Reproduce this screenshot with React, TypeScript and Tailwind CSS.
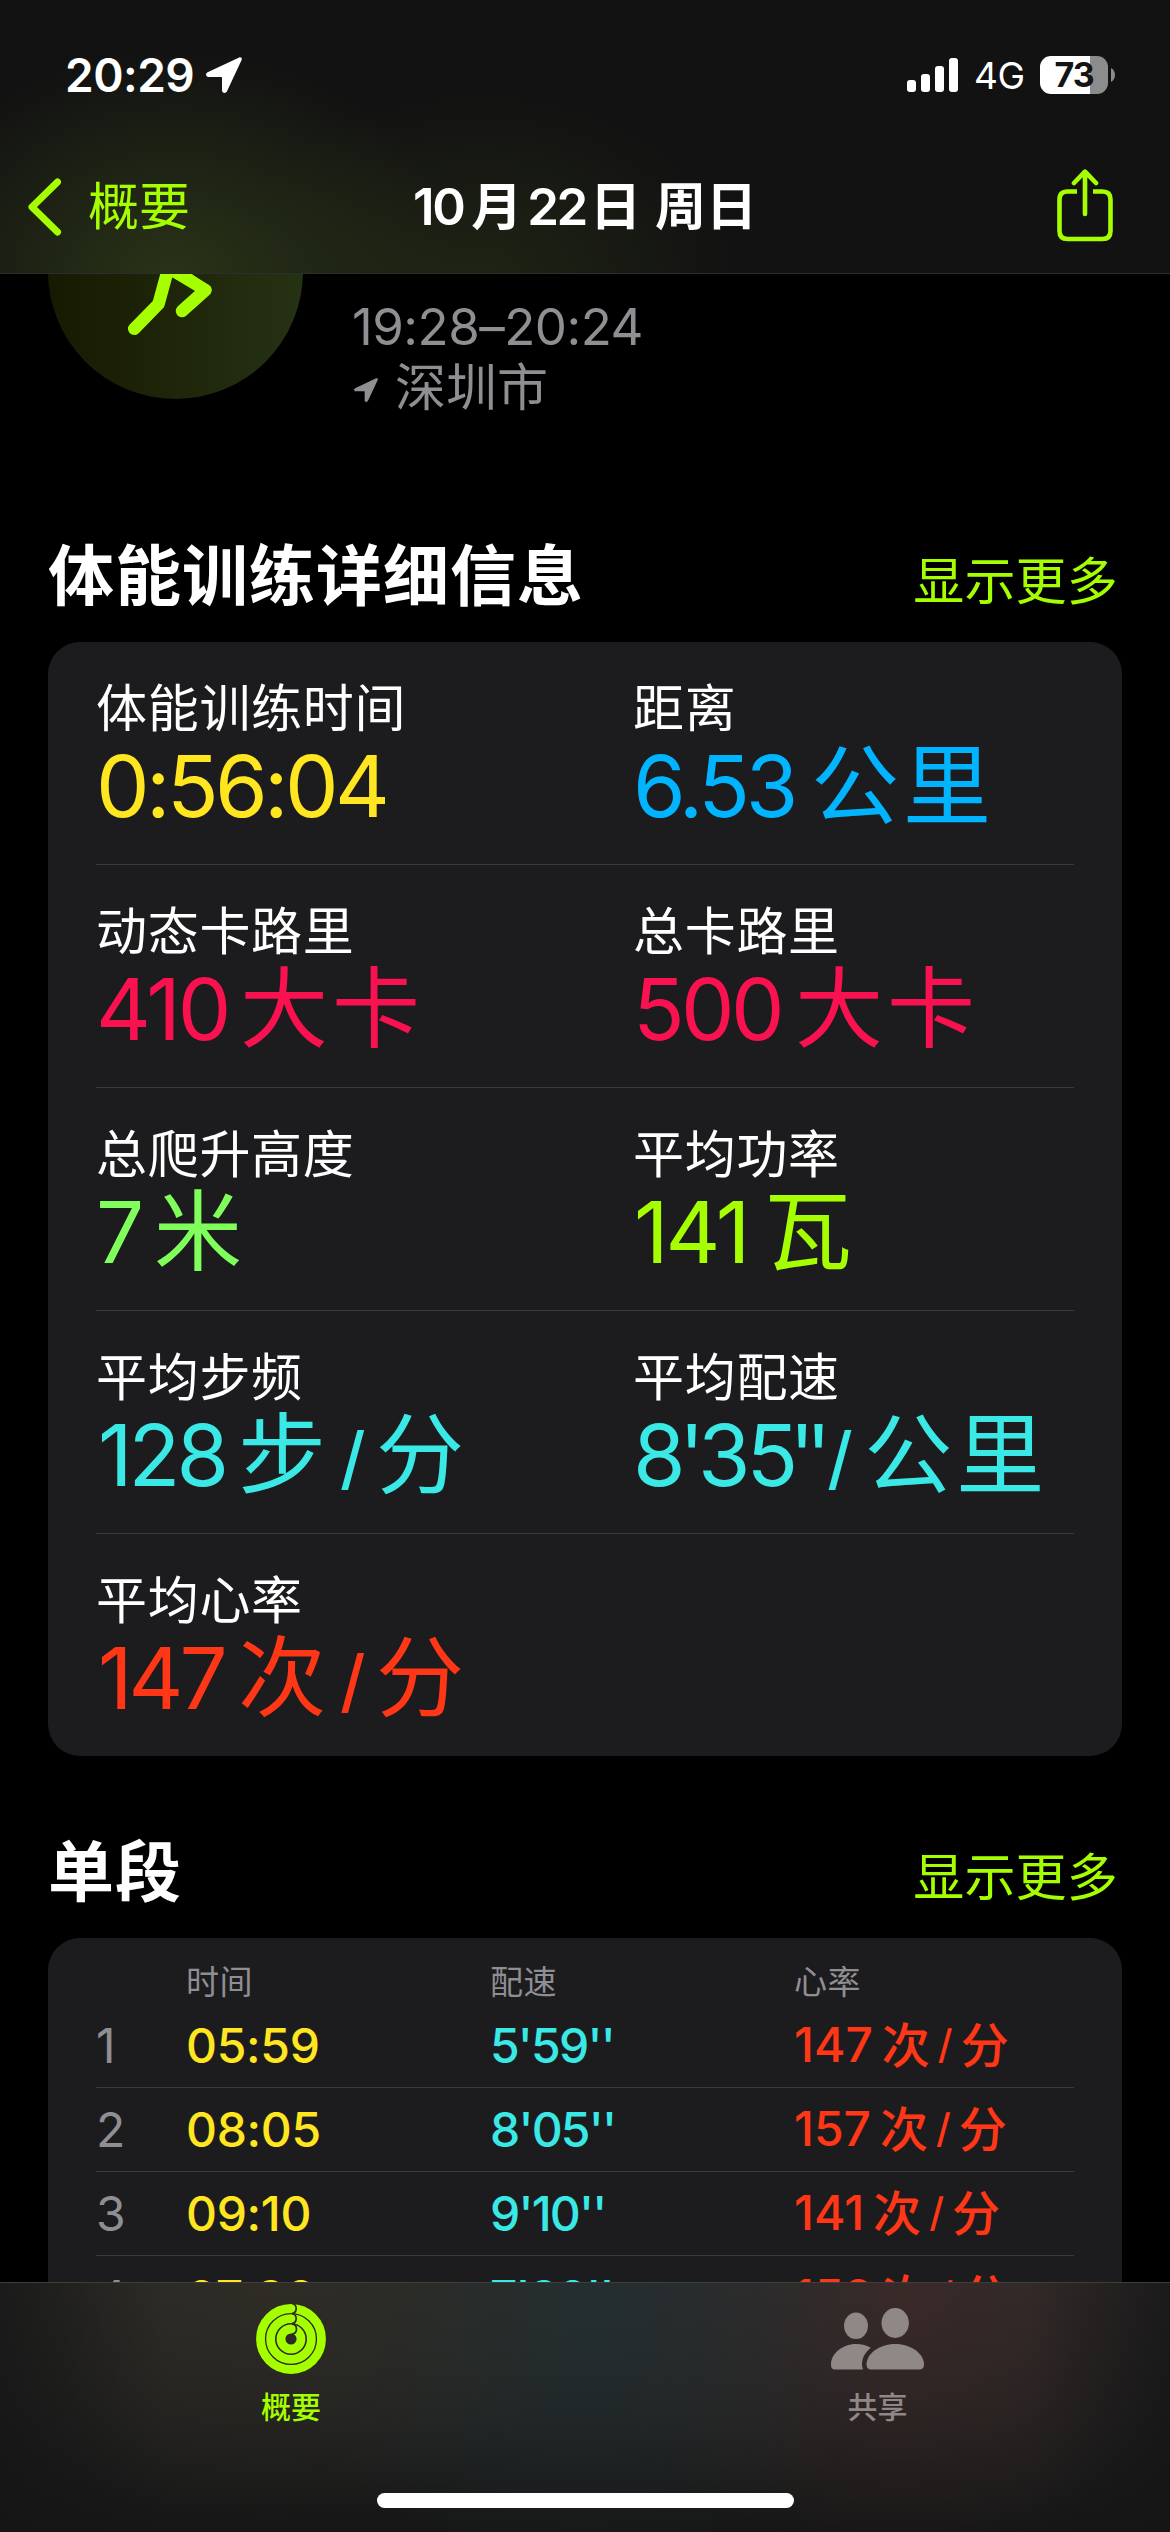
import React from "react";

type Part = { text: string; className?: string };
type Metric = { label: string; color: string; parts: Part[] };

const metrics: Metric[][] = [
  [
    {
      label: "体能训练时间",
      color: "text-[#ffe620]",
      parts: [{ text: "0:56:04", className: "tracking-[-3.6px]" }],
    },
    {
      label: "距离",
      color: "text-[#00b4ff]",
      parts: [
        { text: "6.53", className: "w-[178px] tracking-[-4px]" },
        { text: "公里", className: "text-[88px] leading-[87px] tracking-[4px]" },
      ],
    },
  ],
  [
    {
      label: "动态卡路里",
      color: "text-[#fa114f]",
      parts: [
        { text: "410", className: "w-[144px] tracking-[-3px]" },
        { text: "大卡", className: "text-[88px] leading-[87px] tracking-[4px]" },
      ],
    },
    {
      label: "总卡路里",
      color: "text-[#fa114f]",
      parts: [
        { text: "500", className: "w-[162px] tracking-[-3.6px]" },
        { text: "大卡", className: "text-[88px] leading-[87px] tracking-[4px]" },
      ],
    },
  ],
  [
    {
      label: "总爬升高度",
      color: "text-[#80ff5c]",
      parts: [
        { text: "7", className: "w-[58px]" },
        { text: "米", className: "text-[88px] leading-[87px]" },
      ],
    },
    {
      label: "平均功率",
      color: "text-[#a6ff00]",
      parts: [
        { text: "141", className: "w-[131px] pl-[1px] tracking-[-3px]" },
        { text: "瓦", className: "text-[88px] leading-[87px]" },
      ],
    },
  ],
  [
    {
      label: "平均步频",
      color: "text-[#3ae8e6]",
      parts: [
        { text: "128", className: "w-[142px] pl-[2px] tracking-[-4px]" },
        { text: "步", className: "w-[102px] text-[88px] leading-[87px]" },
        { text: "/", className: "w-[36px] pt-[2px] text-[69px] font-medium" },
        { text: "分", className: "text-[88px] leading-[87px]" },
      ],
    },
    {
      label: "平均配速",
      color: "text-[#3ae8e6]",
      parts: [
        { text: "8'", className: "tracking-[-6.5px]" },
        { text: "3", className: "tracking-[-4px]" },
        { text: "5''", className: "tracking-[-9px]" },
        { text: "/", className: "ml-[5px] w-[37px] pt-[2px] text-[69px] font-medium" },
        { text: "公里", className: "text-[88px] leading-[87px] tracking-[4px]" },
      ],
    },
  ],
  [
    {
      label: "平均心率",
      color: "text-[#ff3717]",
      parts: [
        { text: "147", className: "w-[142px] pl-[2px] tracking-[-4px]" },
        { text: "次", className: "w-[102px] text-[88px] leading-[87px]" },
        { text: "/", className: "w-[36px] pt-[2px] text-[69px] font-medium" },
        { text: "分", className: "text-[88px] leading-[87px]" },
      ],
    },
  ],
];

const splits = [
  { id: 1, time: "05:59", pace: "5'59''", rate: "147" },
  { id: 2, time: "08:05", pace: "8'05''", rate: "157" },
  { id: 3, time: "09:10", pace: "9'10''", rate: "141" },
  { id: 4, time: "07:30", pace: "7'30''", rate: "152" },
];

function LocationArrow({ className }: { className: string }) {
  return (
    <svg viewBox="0 0 36 36" className={className} fill="currentColor">
      <path d="M33.2 0.4 L1.6 15.2 C-0.8 16.4 -0.2 20 2.6 20 H15.2 Q16 20 16 20.8 V33.2 C16 36.4 19.8 36.8 21 34.2 L35.6 3 C36.4 1.2 35 -0.4 33.2 0.4 Z" />
    </svg>
  );
}

function StatusBar() {
  return (
    <div className="flex h-[150px] items-center justify-between pl-[65px] pr-[55px]">
      <div className="flex items-center">
        <span className="text-[46px] leading-[60px] font-semibold tracking-[-0.5px]">20:29</span>
        <LocationArrow className="ml-[12px] h-[36px] w-[36px]" />
      </div>
      <div className="flex items-center">
        <div className="flex h-[34px] items-end gap-[5px]">
          <div className="h-[12px] w-[9px] rounded-[3px] bg-white" />
          <div className="h-[18px] w-[9px] rounded-[3px] bg-white" />
          <div className="h-[26px] w-[9px] rounded-[3px] bg-white" />
          <div className="h-[34px] w-[9px] rounded-[3px] bg-white" />
        </div>
        <span className="ml-[16px] w-[66px] pt-[2px] text-[37px] leading-[44px] tracking-[-0.5px]">4G</span>
        <div className="flex h-[38px] w-[68px] items-center justify-center rounded-[11px] bg-linear-to-r from-white from-74% to-[#8c8c8c] to-74% text-[34px] leading-[38px] font-bold tracking-[-1px] text-[#141414]">
          73
        </div>
        <svg viewBox="0 0 4 14" className="ml-[3px] h-[14px] w-[4px]" fill="#8c8c8c">
          <path d="M0 0 C2.6 1.4 4 4 4 7 S2.6 12.6 0 14 Z" />
        </svg>
      </div>
    </div>
  );
}

function NavBar() {
  return (
    <div className="grid flex-1 grid-cols-[1fr_auto_1fr] items-center px-[28px] pb-[9px]">
      <div className="flex items-center text-[#a6ff00]">
        <svg viewBox="0 0 34 58" className="h-[58px] w-[34px]" fill="none" stroke="currentColor" strokeWidth="7" strokeLinecap="round" strokeLinejoin="round">
          <path d="M29.5 4 L4 29 L29.5 54" />
        </svg>
        <span className="ml-[26px] text-[51px] leading-[60px]">概要</span>
      </div>
      <h1 className="flex text-[51px] leading-[60px] font-semibold whitespace-pre">
        <span className="tracking-[-2.5px]">10</span>
        <span className="ml-[8px]">月</span>
        <span className="ml-[5px] tracking-[-2.5px]">22</span>
        <span className="ml-[4px]">日</span>
        <span className="ml-[14px]">周日</span>
      </h1>
      <svg viewBox="0 0 56 73" className="mr-[29px] mb-[3px] h-[73px] w-[56px] justify-self-end text-[#a6ff00]" fill="none" stroke="currentColor" strokeWidth="4.6" strokeLinecap="round" strokeLinejoin="round">
        <path strokeLinecap="butt" d="M20 22.5 H10.5 Q2.5 22.5 2.5 30.5 V62 Q2.5 70 10.5 70 H45.5 Q53.5 70 53.5 62 V30.5 Q53.5 22.5 45.5 22.5 H36" />
        <path d="M28 3 V45 M17 14 L28 2.6 L39 14" />
      </svg>
    </div>
  );
}

function SectionHeader({ title }: { title: string }) {
  return (
    <div className="flex items-baseline justify-between pb-[26px]">
      <h2 className="text-[66px] leading-[80px] font-bold tracking-[1px]">{title}</h2>
      <span className="pr-[4px] text-[51px] leading-[60px] tracking-[0.2px] text-[#a6ff00]">显示更多</span>
    </div>
  );
}

function MetricCell({ metric }: { metric: Metric }) {
  return (
    <div className="pl-12">
      <p className="text-[51px] leading-[60px] tracking-[0.7px]">{metric.label}</p>
      <p className={`mt-[3px] flex text-[85px] leading-[90px] whitespace-nowrap ${metric.color}`}>
        {metric.parts.map((part, i) => (
          <span key={i} className={part.className}>
            {part.text}
          </span>
        ))}
      </p>
    </div>
  );
}

function ActivityIcon() {
  return (
    <svg viewBox="-35 -35 70 70" className="h-[70px] w-[70px]" fill="none">
      <g stroke="#a6ff00" strokeWidth="8.8">
        <circle r="30.5" />
        <circle r="20.4" />
        <circle r="10" />
      </g>
      <g stroke="#2c2b22" strokeWidth="1.7">
        <path d="M1 -35.6 A5.2 5.2 0 0 1 1 -25.4" />
        <path d="M1 -25.5 A5.2 5.2 0 0 1 1 -15.3" />
        <path d="M1 -15.2 A5.2 5.2 0 0 1 1 -4.9" />
      </g>
    </svg>
  );
}

function PeopleIcon() {
  return (
    <svg viewBox="830 2304 93 70" className="h-[70px] w-[93px]" fill="#8f8886">
      <ellipse cx="855" cy="2325.8" rx="12" ry="13.2" />
      <ellipse cx="894.2" cy="2323" rx="13.7" ry="15" />
      <path d="M834.5 2369.5 C831 2369.5 830 2367.5 830 2364.5 C830 2354 841 2344 855 2344 C861 2344 866 2345.5 869.8 2347.8 C862 2354 859.5 2362 862 2369.5 Z" />
      <path d="M870.5 2369.5 C867 2369.5 865.5 2367.5 865.5 2364.5 C865.5 2354 878 2344 894.2 2344 C910.5 2344 923 2354 923 2364.5 C923 2367.5 921.5 2369.5 918 2369.5 Z" />
    </svg>
  );
}

export default function App() {
  return (
    <div className="flex h-[2532px] w-[1170px] flex-col overflow-hidden bg-black font-['Inter','Noto_Sans_CJK_SC',sans-serif] text-white">
      <header className="flex h-[274px] shrink-0 flex-col border-b border-[#2c2e28] bg-[#121212] bg-[radial-gradient(ellipse_290px_230px_at_175px_280px,#2a3417,transparent),radial-gradient(ellipse_260px_190px_at_480px_280px,#1f2414,transparent)]">
        <StatusBar />
        <NavBar />
      </header>

      <main className="min-h-0 flex-1 overflow-hidden px-12">
        {/* Workout summary, scrolled partly under the header */}
        <div className="-mt-[130px] flex h-[275px] gap-12">
          <div className="size-[255px] shrink-0 rounded-full bg-linear-to-r from-[#171a02] to-[#263214]">
            <svg viewBox="48 144 255 255" className="size-[255px]" fill="none" stroke="#a6ff00" strokeWidth="12.5" strokeLinecap="round" strokeLinejoin="round">
              <path d="M170 262 L158.5 304 L134.2 328.8" />
              <path d="M172 270 L205.5 290 L182 311" />
              <path d="M165 262 L186 270 L206 284 L196 289 L170 276 Z" fill="#a6ff00" stroke="none" />
            </svg>
          </div>
          <div className="pt-[152px] pl-[1px] text-[51px] leading-[61px] text-[#8e8e93]">
            <p className="tracking-[-0.5px]">19:28–20:24</p>
            <p className="flex items-center">
              <LocationArrow className="mt-[4px] ml-[2px] h-[26px] w-[24px]" />
              <span className="ml-[17px]">深圳市</span>
            </p>
          </div>
        </div>

        <section className="mt-[117px]">
          <SectionHeader title="体能训练详细信息" />
          <div className="h-[1114px] rounded-[32px] bg-[#1c1c1e]">
            {metrics.map((row, i) => (
              <div key={i}>
                {i > 0 && <div className="mx-12 h-px bg-[#3a3a3c]" />}
                <div className="grid h-[222px] grid-cols-2 pt-[37px]">
                  {row.map((metric) => (
                    <MetricCell key={metric.label} metric={metric} />
                  ))}
                </div>
              </div>
            ))}
          </div>
        </section>

        <section className="mt-[76px]">
          <SectionHeader title="单段" />
          <div className="rounded-t-[32px] bg-[#1c1c1e] px-12 pt-[22px]">
            <div className="grid grid-cols-[90px_304px_304px_1fr] text-[33px] leading-[44px] tracking-[0.5px] text-[#8e8e93]">
              <span />
              <span>时间</span>
              <span>配速</span>
              <span>心率</span>
            </div>
            {splits.map((split) => (
              <div
                key={split.id}
                className="grid h-[84px] grid-cols-[90px_304px_304px_1fr] items-center border-b border-[#3a3a3c] text-[48px] leading-[60px] font-medium"
              >
                <span className="font-normal text-[#8e8e93]">{split.id}</span>
                <span className="tracking-[-0.3px] text-[#ffe620]">{split.time}</span>
                <span className="tracking-[-1.8px] text-[#3ae8e6]">{split.pace}</span>
                <span className="flex text-[#ff3717]">
                  <span>{split.rate}</span>
                  <span className="ml-[9px] pt-px">次</span>
                  <span className="ml-[8px] text-[40px]">/</span>
                  <span className="ml-[8px] pt-px">分</span>
                </span>
              </div>
            ))}
          </div>
        </section>
      </main>

      <footer className="flex h-[250px] shrink-0 flex-col items-center border-t border-[#3e3e3e] bg-[linear-gradient(90deg,#141414b0,transparent_14%,transparent_88%,#141414b0),radial-gradient(ellipse_330px_240px_at_270px_0px,#302d24cc,transparent),radial-gradient(ellipse_320px_260px_at_580px_20px,#233032cc,transparent),radial-gradient(ellipse_320px_260px_at_900px_10px,#3d2a28cc,transparent),linear-gradient(#292929,#161616)]">
        <div className="grid w-full flex-1 grid-cols-2 pt-[21px] text-[30px] leading-[40px] font-medium">
          <div className="flex flex-col items-center pr-[3px] text-[#a6ff00]">
            <ActivityIcon />
            <span className="mt-[13px]">概要</span>
          </div>
          <div className="flex flex-col items-center text-[#8f8886]">
            <PeopleIcon />
            <span className="mt-[13px]">共享</span>
          </div>
        </div>
        <div className="mb-[24px] h-[15px] w-[417px] rounded-full bg-white" />
      </footer>
    </div>
  );
}
